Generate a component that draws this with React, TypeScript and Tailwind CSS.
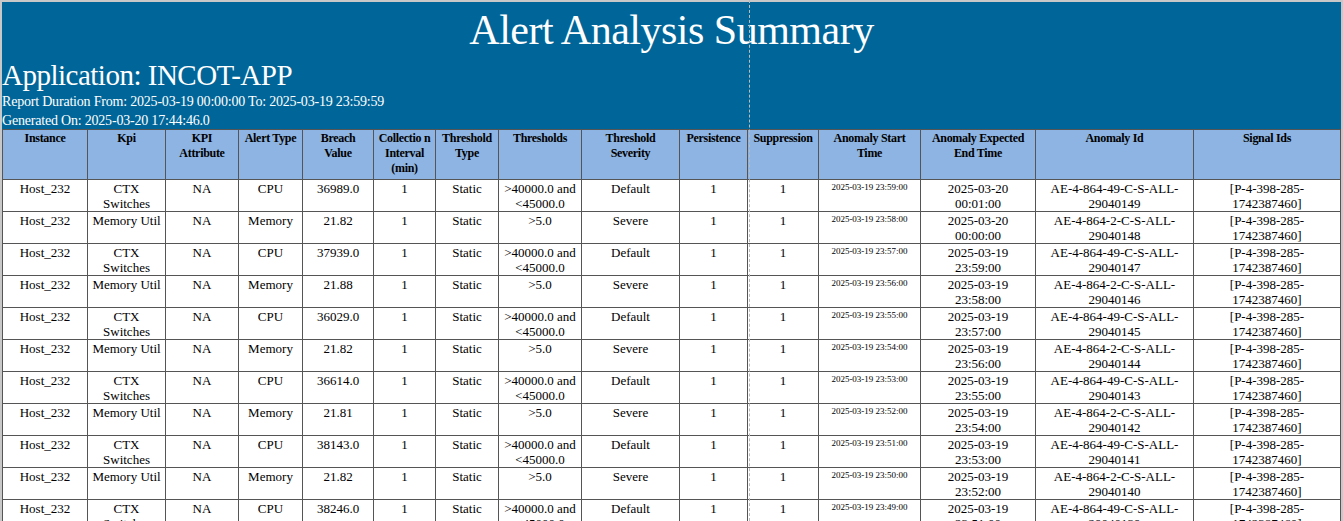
const cols = [85, 78, 73, 64, 71, 62, 63, 83, 98, 68, 71, 102, 115, 158, 147]
const heads = [
  "Instance", "Kpi", "KPI Attribute", "Alert Type", "Breach Value", "Collectio n Interval (min)",
  "Threshold Type", "Thresholds", "Threshold Severity", "Persistence", "Suppression",
  "Anomaly Start Time", "Anomaly Expected End Time", "Anomaly Id", "Signal Ids",
]

const rows = Array.from({ length: 11 }, (_, i) => {
  const cpu = i % 2 === 0
  const breach = ["36989.0", "21.82", "37939.0", "21.88", "36029.0", "21.82", "36614.0", "21.81", "38143.0", "21.82", "38246.0"][i]
  const min = 59 - i
  const start = `2025-03-19 23:${String(min).padStart(2, "0")}:00`
  const endMin = min + 2
  const end = endMin >= 60 ? `2025-03-20 00:${String(endMin - 60).padStart(2, "0")}:00` : `2025-03-19 23:${String(endMin).padStart(2, "0")}:00`
  return [
    "Host_232",
    cpu ? "CTX Switches" : "Memory Util",
    "NA",
    cpu ? "CPU" : "Memory",
    breach,
    "1",
    "Static",
    cpu ? ">40000.0 and <45000.0" : ">5.0",
    cpu ? "Default" : "Severe",
    "1",
    "1",
    start,
    end,
    `AE-4-864-${cpu ? "49" : "2"}-C-S-ALL-${29040149 - i}`,
    "[P-4-398-285-1742387460]",
  ]
})

export default function App() {
  return (
    <div className="relative w-[1343px] h-[521px] overflow-hidden bg-[#c8c8c8] pl-[2px] pt-[2px]" style={{ fontFamily: '"Liberation Serif", serif' }}>
      <div className="w-[1339px] bg-white h-full">
        <div className="bg-[#006699] text-white h-[127px]">
          <div className="text-center text-[42px] leading-[56px] tracking-[-0.5px]">Alert Analysis Summary</div>
          <div className="text-[29px] leading-[34px] tracking-[-0.5px]">Application: INCOT-APP</div>
          <div className="text-[14px] leading-[17px] mt-[1px] tracking-[-0.2px]">Report Duration From: 2025-03-19 00:00:00 To: 2025-03-19 23:59:59</div>
          <div className="text-[14px] leading-[17px] mt-[2px] tracking-[-0.2px]">Generated On: 2025-03-20 17:44:46.0</div>
        </div>
        <table className="border-collapse table-fixed text-black">
          <colgroup>
            {cols.map((w, i) => <col key={i} style={{ width: w }} />)}
          </colgroup>
          <thead>
            <tr className="h-[50px] bg-[#8db4e2]">
              {heads.map((h, i) => (
                <th key={i} className="border border-[#555] align-top text-[12px] leading-[15px] font-bold px-[4px] pt-[1px] tracking-[-0.3px]">{h}</th>
              ))}
            </tr>
          </thead>
          <tbody>
            {rows.map((r, ri) => (
              <tr key={ri} className="h-[31px]">
                {r.map((c, ci) => (
                  <td key={ci} className={`border border-[#555] align-top text-center px-[4px] ${ci === 11 ? "text-[9px] leading-[12px] pt-[1px] px-[1px]" : "text-[13px] leading-[15px] pt-[1px]"}`}>{c}</td>
                ))}
              </tr>
            ))}
          </tbody>
        </table>
      </div>
      <div className="absolute top-0 bottom-0 left-[749px] border-l border-dashed border-[#bbbbbb]" />
    </div>
  )
}
